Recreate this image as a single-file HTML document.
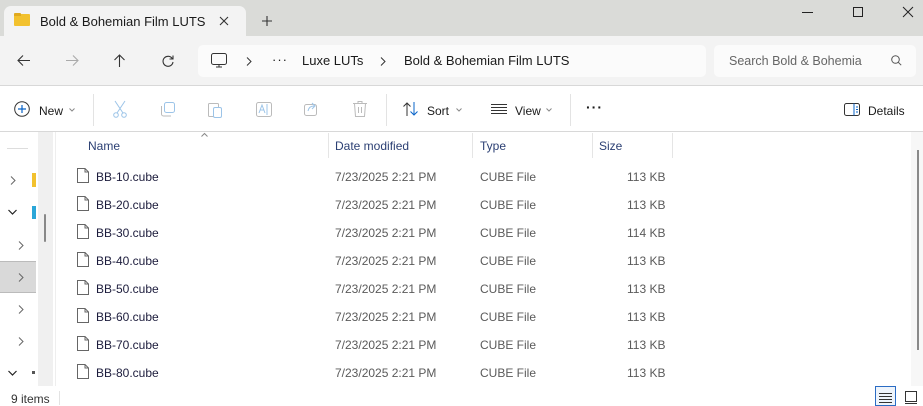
<!DOCTYPE html>
<html><head><meta charset="utf-8"><style>
*{margin:0;padding:0;box-sizing:border-box}
body{width:923px;height:406px;overflow:hidden;font-family:"Liberation Sans",sans-serif;font-size:12px;color:#1a1a1a;background:#fff;position:relative}
.a{position:absolute}
svg{position:absolute;overflow:visible}
</style></head><body>
<div class="a" style="left:0;top:0;width:923px;height:37px;background:#dadbd8"></div>
<div class="a" style="left:4px;top:6px;width:242px;height:31px;background:#f3f3f3;border-radius:7px 7px 0 0"></div>
<div class="a" style="left:0;top:36px;width:923px;height:50px;background:#f3f3f3;border-bottom:1px solid #d8d8d8"></div>
<div class="a" style="left:14px;top:14px;width:16px;height:12px;background:#f2c12e;border-radius:1px"></div>
<div class="a" style="left:14px;top:13px;width:7px;height:3px;background:#e0a91e;border-radius:1px 1px 0 0"></div>
<div class="a" style="left:40px;top:14px;font-size:13px">Bold &amp; Bohemian Film LUTS</div>
<svg style="left:219px;top:16px" width="10" height="10"><path d="M1 1L9 9M9 1L1 9" stroke="#333" stroke-width="1.1"/></svg>
<svg style="left:262px;top:16px" width="10" height="10"><path d="M5 0V10M0 5H10" stroke="#333" stroke-width="1.1"/></svg>
<svg style="left:802px;top:12px" width="12" height="1"><path d="M0 0.5H11" stroke="#222"/></svg>
<svg style="left:853px;top:7px" width="10" height="10"><rect x="0.5" y="0.5" width="9" height="9" fill="none" stroke="#222"/></svg>
<svg style="left:903px;top:7px" width="10" height="10"><path d="M0 0L10 10M10 0L0 10" stroke="#222"/></svg>
<svg style="left:17px;top:55px" width="13" height="11"><path d="M13 5.5H1M6 0.5L1 5.5L6 10.5" fill="none" stroke="#333" stroke-width="1.1"/></svg>
<svg style="left:66px;top:55px" width="13" height="11"><path d="M0 5.5H12M7 0.5L12 5.5L7 10.5" fill="none" stroke="#aaa" stroke-width="1.1"/></svg>
<svg style="left:114px;top:54px" width="11" height="13"><path d="M5.5 13V1M0.5 6L5.5 1L10.5 6" fill="none" stroke="#333" stroke-width="1.1"/></svg>
<svg style="left:162px;top:55px" width="12" height="12"><path d="M10.5 4A5 5 0 1 0 11 7M11 0.5V4H7.5" fill="none" stroke="#333" stroke-width="1.1"/></svg>
<div class="a" style="left:198px;top:45px;width:508px;height:32px;background:#fbfbfb;border-radius:5px"></div>
<svg style="left:211px;top:53px" width="17" height="15"><rect x="0.5" y="0.5" width="15" height="11" rx="2" fill="none" stroke="#333"/><path d="M5 14H11M8 12V14" stroke="#333"/></svg>
<svg style="left:246px;top:57px" width="6" height="9"><path d="M1 0.5L5 4.5L1 8.5" fill="none" stroke="#333"/></svg>
<div class="a" style="left:272px;top:52px;font-size:13px;letter-spacing:1px">···</div>
<div class="a" style="left:302px;top:53px;font-size:13px">Luxe LUTs</div>
<svg style="left:380px;top:57px" width="6" height="9"><path d="M1 0.5L5 4.5L1 8.5" fill="none" stroke="#333"/></svg>
<div class="a" style="left:404px;top:53px;font-size:13px">Bold &amp; Bohemian Film LUTS</div>
<div class="a" style="left:714px;top:45px;width:202px;height:32px;background:#fbfbfb;border-radius:5px"></div>
<div class="a" style="left:729px;top:54px;font-size:12.5px;color:#666">Search Bold &amp; Bohemia</div>
<svg style="left:891px;top:55px" width="11" height="11"><circle cx="4.5" cy="4.5" r="3.8" fill="none" stroke="#555"/><path d="M7.3 7.3L10.2 10.2" stroke="#555"/></svg>
<div class="a" style="left:0;top:131px;width:923px;height:1px;background:#d8d8d8"></div>
<svg style="left:14px;top:101px" width="16" height="16"><circle cx="8" cy="8" r="7.3" fill="none" stroke="#333"/><path d="M8 4V12M4 8H12" stroke="#0a64c8" stroke-width="1.2"/></svg>
<div class="a" style="left:39px;top:104px">New</div>
<svg style="left:69px;top:108px" width="6" height="4"><path d="M0.5 0.5L3 3L5.5 0.5" fill="none" stroke="#888"/></svg>
<div class="a" style="left:93px;top:94px;width:1px;height:32px;background:#e3e3e3"></div>
<svg style="left:112px;top:101px" width="16" height="17"><path d="M3 0L11 12M13 0L5 12" stroke="#9cc4e8" fill="none"/><circle cx="4" cy="14" r="2.3" fill="none" stroke="#9cc4e8"/><circle cx="12" cy="14" r="2.3" fill="none" stroke="#9cc4e8"/></svg>
<svg style="left:161px;top:102px" width="14" height="15"><rect x="3.5" y="0.5" width="10" height="10" rx="2" fill="none" stroke="#9cc4e8"/><path d="M0.5 4V12A2 2 0 0 0 2.5 14H10" fill="none" stroke="#bbb"/></svg>
<svg style="left:208px;top:101px" width="15" height="17"><rect x="0.5" y="2.5" width="10" height="13" rx="1" fill="none" stroke="#bbb"/><rect x="5.5" y="6.5" width="8" height="10" rx="1.5" fill="#fff" stroke="#9cc4e8"/></svg>
<svg style="left:256px;top:102px" width="16" height="15"><rect x="0.5" y="0.5" width="15" height="14" rx="2" fill="none" stroke="#bbb"/><path d="M3 11L6 3L9 11M4.2 8H7.8M11 2V13" stroke="#9cc4e8" fill="none"/></svg>
<svg style="left:304px;top:102px" width="15" height="14"><rect x="0.5" y="2.5" width="12" height="11" rx="2" fill="none" stroke="#bbb"/><path d="M4 9Q5 4 10 4M8 1L11 4L8 7" fill="none" stroke="#9cc4e8"/></svg>
<svg style="left:353px;top:101px" width="14" height="16"><path d="M0 2.5H14M5 2.5V0.5H9V2.5M1.5 2.5L2.5 15.5H11.5L12.5 2.5M5.5 6V12M8.5 6V12" fill="none" stroke="#bbb"/></svg>
<div class="a" style="left:386px;top:94px;width:1px;height:32px;background:#e3e3e3"></div>
<svg style="left:403px;top:102px" width="15" height="14"><path d="M4 14V1M0.5 4.5L4 1L7.5 4.5" fill="none" stroke="#333"/><path d="M11 0V13M7.5 9.5L11 13L14.5 9.5" fill="none" stroke="#0a64c8"/></svg>
<div class="a" style="left:427px;top:104px">Sort</div>
<svg style="left:456px;top:108px" width="6" height="4"><path d="M0.5 0.5L3 3L5.5 0.5" fill="none" stroke="#888"/></svg>
<svg style="left:491px;top:104px" width="16" height="10"><path d="M0 0.5H16M0 3.5H16M0 6.5H16M0 9.5H16" stroke="#333"/></svg>
<div class="a" style="left:515px;top:104px">View</div>
<svg style="left:546px;top:108px" width="6" height="4"><path d="M0.5 0.5L3 3L5.5 0.5" fill="none" stroke="#888"/></svg>
<div class="a" style="left:570px;top:94px;width:1px;height:32px;background:#e3e3e3"></div>
<div class="a" style="left:586px;top:99px;font-size:14px;font-weight:bold;letter-spacing:1px">···</div>
<svg style="left:844px;top:103px" width="16" height="13"><rect x="0.5" y="0.5" width="15" height="12" rx="2" fill="none" stroke="#333"/><path d="M10 0.5V12.5" stroke="#0a64c8"/><path d="M12 4H14M12 6.5H14M12 9H14" stroke="#0a64c8"/></svg>
<div class="a" style="left:868px;top:104px">Details</div>
<div class="a" style="left:7px;top:148px;width:21px;height:1px;background:#ddd"></div>
<div class="a" style="left:38px;top:132px;width:15px;height:254px;background:#f0f0f0"></div>
<div class="a" style="left:44px;top:214px;width:2px;height:28px;background:#888;border-radius:1px"></div>
<div class="a" style="left:0;top:261px;width:36px;height:32px;background:#d9d9d9;border-top:1px solid #bbb;border-bottom:1px solid #bbb"></div>
<svg style="left:10px;top:176px" width="6" height="9"><path d="M1 0.5L5 4.5L1 8.5" fill="none" stroke="#666"/></svg>
<svg style="left:8px;top:209px" width="9" height="6"><path d="M0.5 1L4.5 5L8.5 1" fill="none" stroke="#222" stroke-width="1.2"/></svg>
<svg style="left:18px;top:241px" width="6" height="9"><path d="M1 0.5L5 4.5L1 8.5" fill="none" stroke="#666"/></svg>
<svg style="left:18px;top:273px" width="6" height="9"><path d="M1 0.5L5 4.5L1 8.5" fill="none" stroke="#666"/></svg>
<svg style="left:18px;top:305px" width="6" height="9"><path d="M1 0.5L5 4.5L1 8.5" fill="none" stroke="#666"/></svg>
<svg style="left:18px;top:337px" width="6" height="9"><path d="M1 0.5L5 4.5L1 8.5" fill="none" stroke="#666"/></svg>
<svg style="left:8px;top:370px" width="9" height="6"><path d="M0.5 1L4.5 5L8.5 1" fill="none" stroke="#222" stroke-width="1.2"/></svg>
<div class="a" style="left:32px;top:173px;width:4px;height:14px;background:#f2c12e"></div>
<div class="a" style="left:32px;top:206px;width:4px;height:13px;background:#2aa6d8"></div>
<div class="a" style="left:32px;top:371px;width:3px;height:3px;background:#555"></div>
<div class="a" style="left:55px;top:132px;width:1px;height:254px;background:#eee"></div>
<div class="a" style="left:88px;top:139px;color:#2b3f73">Name</div>
<svg style="left:201px;top:133px" width="7" height="4"><path d="M0.5 3.5L3.5 0.5L6.5 3.5" fill="none" stroke="#888"/></svg>
<div class="a" style="left:328px;top:133px;width:1px;height:25px;background:#e5e5e5"></div>
<div class="a" style="left:335px;top:139px;color:#2b3f73">Date modified</div>
<div class="a" style="left:472px;top:133px;width:1px;height:25px;background:#e5e5e5"></div>
<div class="a" style="left:480px;top:139px;color:#2b3f73">Type</div>
<div class="a" style="left:592px;top:133px;width:1px;height:25px;background:#e5e5e5"></div>
<div class="a" style="left:599px;top:139px;color:#2b3f73">Size</div>
<div class="a" style="left:672px;top:133px;width:1px;height:25px;background:#e5e5e5"></div>
<div class="a" style="left:911px;top:132px;width:12px;height:254px;background:#f7f7f7"></div>
<div class="a" style="left:917px;top:150px;width:2px;height:200px;background:#8a8a8a"></div>
<div id="rows"></div>
<script>
var s=['113','113','114','113','113','113','113','113'];var h='';
for(var i=0;i<8;i++){var y=162+i*28;
h+='<svg style="left:77px;top:'+(y+6)+'px" width="12" height="15"><path d="M0.5 0.5H8L11.5 4V14.5H0.5Z M8 0.5V4H11.5" fill="#fff" stroke="#666"/></svg>'+
'<div class="a" style="left:96px;top:'+(y+8)+'px;color:#1c1c3c">BB-'+(i+1)+'0.cube</div>'+
'<div class="a" style="left:335px;top:'+(y+8)+'px;color:#5a5a5a">7/23/2025 2:21 PM</div>'+
'<div class="a" style="left:480px;top:'+(y+8)+'px;color:#5a5a5a">CUBE File</div>'+
'<div class="a" style="left:627px;top:'+(y+8)+'px;color:#5a5a5a">'+s[i]+' KB</div>';}
document.getElementById('rows').outerHTML=h;
</script>
<div class="a" style="left:11px;top:392px;color:#333">9 items</div>
<div class="a" style="left:59px;top:391px;width:1px;height:14px;background:#e3e3e3"></div>
<div class="a" style="left:875px;top:386px;width:21px;height:20px;border:1px solid #2b6cc4;background:#eef4fb"></div>
<svg style="left:879px;top:393px" width="13" height="10"><path d="M0 0.5H13M0 3.5H13M0 6.5H13M0 9.5H13" stroke="#333"/></svg>
<svg style="left:905px;top:391px" width="12" height="12"><rect x="0.5" y="0.5" width="11" height="10" fill="none" stroke="#333"/><path d="M0 12.5H12" stroke="#333"/></svg>
</body></html>
